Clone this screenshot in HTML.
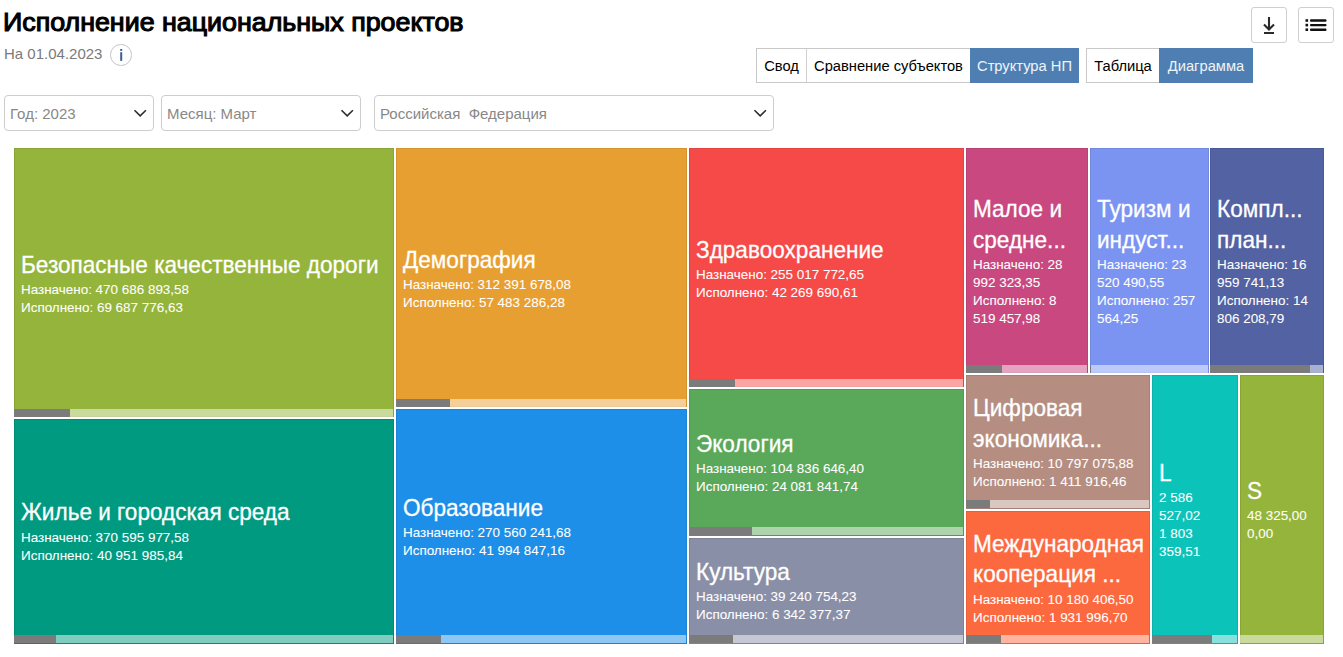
<!DOCTYPE html>
<html lang="ru"><head><meta charset="utf-8"><title>Исполнение национальных проектов</title>
<style>
*{box-sizing:border-box;margin:0;padding:0}
html,body{width:1343px;height:657px;overflow:hidden;background:#fff}
body{position:relative;font-family:"Liberation Sans",sans-serif;color:#000}
.t{position:absolute;white-space:pre;line-height:1}
.cell{position:absolute;overflow:hidden;box-shadow:inset 0 0 0 1px rgba(0,0,0,.08)}
.cell .t{color:#fff}
.cell .s{-webkit-text-stroke:0.08px #fff}
.bar{position:absolute;height:8px;background:rgba(255,255,255,.5)}
.bar i{position:absolute;left:0;top:0;bottom:0;background:#7b7b7b}
.box{position:absolute;border:1px solid #cfcfcf;background:#fff}
.grp{position:absolute;border:1px solid #c8c8c8;height:35px;top:48px;background:#fff}
.btn{position:absolute;top:0;height:33px;font-size:14.7px;line-height:34px;text-align:center;white-space:pre}
.on{background:#4f7fb2;color:#eef3f8;top:-1px;height:35px;line-height:36px}
.sep{border-left:1px solid #d0d0d0}
.dd{position:absolute;top:95px;height:36px;border:1px solid #cdcdcd;border-radius:4px;background:#fff}
.dd .t{color:#8a8a8a}
.chev{position:absolute;width:14px;height:9px}
</style></head><body>
<div class="t" style="left:3.0px;top:9.19px;font-size:26px;-webkit-text-stroke:1.1px #000;transform:scaleX(1.031);transform-origin:0 0;">Исполнение национальных проектов</div>
<div class="t" style="left:4px;top:45.90px;font-size:15px;color:#7a7a7a;">На 01.04.2023</div>
<div style="position:absolute;left:110px;top:44px;width:21.5px;height:21.5px;border:1px solid #c4c4c4;border-radius:50%;"></div>
<svg style="position:absolute;left:110px;top:44px" width="22" height="22"><rect x="10.2" y="5" width="2" height="1.9" fill="#3f5f8f"/><rect x="10.2" y="8.2" width="2" height="8.7" fill="#3f5f8f"/></svg>
<div class="box" style="left:1251px;top:7px;width:36px;height:36px;border-radius:3px"></div>
<svg style="position:absolute;left:1251px;top:7px" width="36" height="35"><path d="M18 10 V22.5 M13 17.5 L18 22.5 L23 17.5" stroke="#2a2a2a" stroke-width="2.1" fill="none"/><rect x="13" y="25" width="10" height="2" fill="#2a2a2a"/></svg>
<div class="box" style="left:1298px;top:7px;width:36px;height:36px;border-radius:3px"></div>
<svg style="position:absolute;left:1298px;top:7px" width="35" height="35"><g fill="#111"><rect x="7.5" y="12.2" width="2.6" height="2.6"/><rect x="7.5" y="16.8" width="2.6" height="2.6"/><rect x="7.5" y="21.4" width="2.6" height="2.6"/><rect x="12" y="12.3" width="16.5" height="2.4" rx="1"/><rect x="12" y="16.9" width="16.5" height="2.4" rx="1"/><rect x="12" y="21.5" width="16.5" height="2.4" rx="1"/></g></svg>
<div class="grp" style="left:756px;width:323px"><div class="btn" style="left:0;width:49px">Свод</div><div class="btn sep" style="left:49px;width:164px">Сравнение субъектов</div><div class="btn on" style="left:213px;width:109px">Структура НП</div></div>
<div class="grp" style="left:1086px;width:167px"><div class="btn" style="left:0;width:72px">Таблица</div><div class="btn on" style="left:72px;width:94px">Диаграмма</div></div>
<div class="dd" style="left:4px;width:150px"></div>
<div class="t" style="left:10px;top:106.40px;font-size:15px;color:#888;">Год: 2023</div>
<svg class="chev" style="left:132.5px;top:108.5px" width="14" height="9"><path d="M1.5 1.2 L7.2 6.8 L12.9 1.2" stroke="#2e2e2e" stroke-width="1.6" fill="none"/></svg>
<div class="dd" style="left:161px;width:200px"></div>
<div class="t" style="left:167px;top:106.40px;font-size:15px;color:#888;">Месяц: Март</div>
<svg class="chev" style="left:339.5px;top:108.5px" width="14" height="9"><path d="M1.5 1.2 L7.2 6.8 L12.9 1.2" stroke="#2e2e2e" stroke-width="1.6" fill="none"/></svg>
<div class="dd" style="left:374px;width:400px"></div>
<div class="t" style="left:380px;top:106.40px;font-size:15px;color:#888;">Российская&nbsp; Федерация</div>
<svg class="chev" style="left:753px;top:108.5px" width="14" height="9"><path d="M1.5 1.2 L7.2 6.8 L12.9 1.2" stroke="#2e2e2e" stroke-width="1.6" fill="none"/></svg>
<div class="cell" style="left:14px;top:148px;width:380px;height:269px;background:#95b43b"><div class="bar" style="left:0;right:1px;bottom:0px"><i style="width:56.3px"></i></div><div class="t" style="left:7px;top:105.82px;font-size:23.6px;transform:scaleX(0.957);transform-origin:0 0;-webkit-text-stroke:0.3px #fff;">Безопасные качественные дороги</div>
<div class="t s" style="left:7px;top:135.11px;font-size:13.45px;">Назначено: 470 686 893,58</div>
<div class="t s" style="left:7px;top:152.91px;font-size:13.45px;">Исполнено: 69 687 776,63</div>
</div>
<div class="cell" style="left:14px;top:419px;width:380px;height:225px;background:#009a80"><div class="bar" style="left:0;right:1px;bottom:1px"><i style="width:42.0px"></i></div><div class="t" style="left:7px;top:82.42px;font-size:23.6px;transform:scaleX(0.957);transform-origin:0 0;-webkit-text-stroke:0.3px #fff;">Жилье и городская среда</div>
<div class="t s" style="left:7px;top:112.21px;font-size:13.45px;">Назначено: 370 595 977,58</div>
<div class="t s" style="left:7px;top:130.11px;font-size:13.45px;">Исполнено: 40 951 985,84</div>
</div>
<div class="cell" style="left:396px;top:148px;width:291px;height:259px;background:#e89f31"><div class="bar" style="left:0;right:1px;bottom:0px"><i style="width:53.5px"></i></div><div class="t" style="left:7px;top:100.82px;font-size:23.6px;transform:scaleX(0.957);transform-origin:0 0;-webkit-text-stroke:0.3px #fff;">Демография</div>
<div class="t s" style="left:7px;top:130.11px;font-size:13.45px;">Назначено: 312 391 678,08</div>
<div class="t s" style="left:7px;top:147.91px;font-size:13.45px;">Исполнено: 57 483 286,28</div>
</div>
<div class="cell" style="left:396px;top:409px;width:291px;height:235px;background:#1e8fe8"><div class="bar" style="left:0;right:1px;bottom:1px"><i style="width:45.2px"></i></div><div class="t" style="left:7px;top:87.82px;font-size:23.6px;transform:scaleX(0.957);transform-origin:0 0;-webkit-text-stroke:0.3px #fff;">Образование</div>
<div class="t s" style="left:7px;top:116.91px;font-size:13.45px;">Назначено: 270 560 241,68</div>
<div class="t s" style="left:7px;top:134.81px;font-size:13.45px;">Исполнено: 41 994 847,16</div>
</div>
<div class="cell" style="left:689px;top:148px;width:275px;height:239px;background:#f64a48"><div class="bar" style="left:0;right:1px;bottom:0px"><i style="width:45.6px"></i></div><div class="t" style="left:7px;top:90.82px;font-size:23.6px;transform:scaleX(0.957);transform-origin:0 0;-webkit-text-stroke:0.3px #fff;">Здравоохранение</div>
<div class="t s" style="left:7px;top:120.11px;font-size:13.45px;">Назначено: 255 017 772,65</div>
<div class="t s" style="left:7px;top:137.91px;font-size:13.45px;">Исполнено: 42 269 690,61</div>
</div>
<div class="cell" style="left:689px;top:389px;width:275px;height:147px;background:#5aa85a"><div class="bar" style="left:0;right:1px;bottom:1px"><i style="width:63.2px"></i></div><div class="t" style="left:7px;top:43.92px;font-size:23.6px;transform:scaleX(0.957);transform-origin:0 0;-webkit-text-stroke:0.3px #fff;">Экология</div>
<div class="t s" style="left:7px;top:73.21px;font-size:13.45px;">Назначено: 104 836 646,40</div>
<div class="t s" style="left:7px;top:90.61px;font-size:13.45px;">Исполнено: 24 081 841,74</div>
</div>
<div class="cell" style="left:689px;top:538px;width:275px;height:106px;background:#8a8fa8"><div class="bar" style="left:0;right:1px;bottom:1px"><i style="width:44.4px"></i></div><div class="t" style="left:7px;top:23.02px;font-size:23.6px;transform:scaleX(0.957);transform-origin:0 0;-webkit-text-stroke:0.3px #fff;">Культура</div>
<div class="t s" style="left:7px;top:51.91px;font-size:13.45px;">Назначено: 39 240 754,23</div>
<div class="t s" style="left:7px;top:69.81px;font-size:13.45px;">Исполнено: 6 342 377,37</div>
</div>
<div class="cell" style="left:966px;top:148px;width:122px;height:225px;background:#c8487f"><div class="bar" style="left:0;right:1px;bottom:0px"><i style="width:35.8px"></i></div><div class="t" style="left:7px;top:49.72px;font-size:23.6px;transform:scaleX(0.957);transform-origin:0 0;-webkit-text-stroke:0.3px #fff;">Малое и</div>
<div class="t" style="left:7px;top:80.62px;font-size:23.6px;transform:scaleX(0.957);transform-origin:0 0;-webkit-text-stroke:0.3px #fff;">средне...</div>
<div class="t s" style="left:7px;top:110.11px;font-size:13.45px;">Назначено: 28</div>
<div class="t s" style="left:7px;top:127.81px;font-size:13.45px;">992 323,35</div>
<div class="t s" style="left:7px;top:146.11px;font-size:13.45px;">Исполнено: 8</div>
<div class="t s" style="left:7px;top:163.81px;font-size:13.45px;">519 457,98</div>
</div>
<div class="cell" style="left:1090px;top:148px;width:119px;height:225px;background:#7b94f2"><div class="bar" style="left:0;right:1px;bottom:0px"><i style="width:1.3px"></i></div><div class="t" style="left:7px;top:49.72px;font-size:23.6px;transform:scaleX(0.957);transform-origin:0 0;-webkit-text-stroke:0.3px #fff;">Туризм и</div>
<div class="t" style="left:7px;top:80.62px;font-size:23.6px;transform:scaleX(0.957);transform-origin:0 0;-webkit-text-stroke:0.3px #fff;">индуст...</div>
<div class="t s" style="left:7px;top:110.11px;font-size:13.45px;">Назначено: 23</div>
<div class="t s" style="left:7px;top:127.81px;font-size:13.45px;">520 490,55</div>
<div class="t s" style="left:7px;top:146.11px;font-size:13.45px;">Исполнено: 257</div>
<div class="t s" style="left:7px;top:163.81px;font-size:13.45px;">564,25</div>
</div>
<div class="cell" style="left:1210px;top:148px;width:114px;height:225px;background:#5262a2"><div class="bar" style="left:0;right:1px;bottom:0px"><i style="width:99.5px"></i></div><div class="t" style="left:7px;top:49.72px;font-size:23.6px;transform:scaleX(0.957);transform-origin:0 0;-webkit-text-stroke:0.3px #fff;">Компл...</div>
<div class="t" style="left:7px;top:80.62px;font-size:23.6px;transform:scaleX(0.957);transform-origin:0 0;-webkit-text-stroke:0.3px #fff;">план...</div>
<div class="t s" style="left:7px;top:110.11px;font-size:13.45px;">Назначено: 16</div>
<div class="t s" style="left:7px;top:127.81px;font-size:13.45px;">959 741,13</div>
<div class="t s" style="left:7px;top:146.11px;font-size:13.45px;">Исполнено: 14</div>
<div class="t s" style="left:7px;top:163.81px;font-size:13.45px;">806 208,79</div>
</div>
<div class="cell" style="left:966px;top:375px;width:184px;height:134px;background:#b58e81"><div class="bar" style="left:0;right:1px;bottom:1px"><i style="width:24.1px"></i></div><div class="t" style="left:7px;top:21.82px;font-size:23.6px;transform:scaleX(0.957);transform-origin:0 0;-webkit-text-stroke:0.3px #fff;">Цифровая</div>
<div class="t" style="left:7px;top:52.52px;font-size:23.6px;transform:scaleX(0.957);transform-origin:0 0;-webkit-text-stroke:0.3px #fff;">экономика...</div>
<div class="t s" style="left:7px;top:81.61px;font-size:13.45px;">Назначено: 10 797 075,88</div>
<div class="t s" style="left:7px;top:100.01px;font-size:13.45px;">Исполнено: 1 411 916,46</div>
</div>
<div class="cell" style="left:966px;top:511px;width:184px;height:133px;background:#fc693f"><div class="bar" style="left:0;right:1px;bottom:1px"><i style="width:34.9px"></i></div><div class="t" style="left:7px;top:21.72px;font-size:23.6px;transform:scaleX(0.957);transform-origin:0 0;-webkit-text-stroke:0.3px #fff;">Международная</div>
<div class="t" style="left:7px;top:52.42px;font-size:23.6px;transform:scaleX(0.957);transform-origin:0 0;-webkit-text-stroke:0.3px #fff;">кооперация ...</div>
<div class="t s" style="left:7px;top:81.51px;font-size:13.45px;">Назначено: 10 180 406,50</div>
<div class="t s" style="left:7px;top:99.91px;font-size:13.45px;">Исполнено: 1 931 996,70</div>
</div>
<div class="cell" style="left:1152px;top:375px;width:86px;height:269px;background:#0cc3b9"><div class="bar" style="left:0;right:1px;bottom:1px"><i style="width:60.0px"></i></div><div class="t" style="left:7px;top:87.22px;font-size:23.6px;transform:scaleX(0.957);transform-origin:0 0;-webkit-text-stroke:0.3px #fff;">L</div>
<div class="t s" style="left:7px;top:115.91px;font-size:13.45px;">2 586</div>
<div class="t s" style="left:7px;top:133.81px;font-size:13.45px;">527,02</div>
<div class="t s" style="left:7px;top:151.71px;font-size:13.45px;">1 803</div>
<div class="t s" style="left:7px;top:170.01px;font-size:13.45px;">359,51</div>
</div>
<div class="cell" style="left:1240px;top:375px;width:84px;height:269px;background:#95b43b"><div class="bar" style="left:0;right:1px;bottom:1px"><i style="width:0.0px"></i></div><div class="t" style="left:7px;top:105.22px;font-size:23.6px;transform:scaleX(0.957);transform-origin:0 0;-webkit-text-stroke:0.3px #fff;">S</div>
<div class="t s" style="left:7px;top:133.81px;font-size:13.45px;">48 325,00</div>
<div class="t s" style="left:7px;top:151.71px;font-size:13.45px;">0,00</div>
</div>
</body></html>
